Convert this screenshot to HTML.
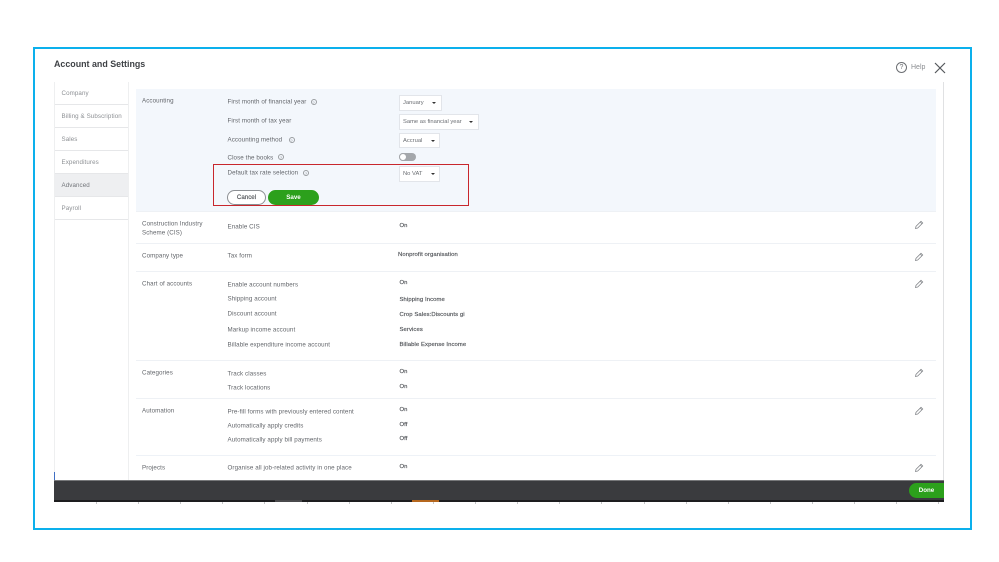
<!DOCTYPE html>
<html>
<head>
<meta charset="utf-8">
<style>
html,body{margin:0;padding:0;background:#fff}
body{width:999px;height:562px;position:relative;overflow:hidden;font-family:"Liberation Sans",sans-serif;color:#5c5f64;filter:blur(.3px)}
.a{position:absolute}
.t{position:absolute;font-size:6.2px;line-height:9px;white-space:nowrap;color:#63666b;letter-spacing:.1px;transform:translateY(.6px)}
.v{color:#4d5055;font-size:5.9px;-webkit-text-stroke:.15px #4d5055;transform:translateY(1.2px)}
.nav{position:absolute;left:55px;width:73px;height:22px;border-bottom:1px solid #e6e7e9;font-size:6.2px;line-height:23px;color:#8d9094;text-indent:6.5px;letter-spacing:.1px}
.sep{position:absolute;left:136px;width:800px;height:1px;background:#eef1f5}
.sel{position:absolute;background:#fff;border:1px solid #e2e5ea;box-sizing:border-box;font-size:5.8px;color:#6a6d72;line-height:15px;text-indent:3px;white-space:nowrap}
.ar{position:absolute;border-left:2.2px solid transparent;border-right:2.2px solid transparent;border-top:2.6px solid #333}
.i{position:absolute;width:6px;height:6px;box-sizing:border-box;border:.6px solid #9a9da1;border-radius:50%;font-size:4px;line-height:5px;text-align:center;color:#8a8d91}
svg.p{position:absolute;width:10px;height:10px}
.tick{position:absolute;top:502px;width:1px;height:1.5px;background:#c4c5c7}
</style>
</head>
<body>
<div class="a" style="left:33px;top:47px;width:939px;height:483px;box-sizing:border-box;border:2px solid #0cb0ec"></div>

<div class="a" style="left:54px;top:57.5px;font-size:8.9px;line-height:12px;font-weight:bold;color:#3f4246">Account and Settings</div>

<div class="a" style="left:896px;top:62px;width:11px;height:11px;box-sizing:border-box;border:1px solid #6d7074;border-radius:50%;font-size:7px;line-height:9px;text-align:center;color:#6d7074">?</div>
<div class="a" style="left:911px;top:63px;font-size:7px;line-height:10px;color:#8a8d91">Help</div>
<svg class="a" style="left:934px;top:62px" width="12" height="12" viewBox="0 0 12 12"><path d="M1 1L11 11M11 1L1 11" stroke="#55585c" stroke-width="1.2" fill="none"/></svg>

<!-- side nav -->
<div class="a" style="left:54px;top:82px;width:1px;height:398px;background:#eeeff0"></div>
<div class="a" style="left:128px;top:82px;width:1px;height:398px;background:#eeeff0"></div>
<div class="nav" style="top:82px">Company</div>
<div class="nav" style="top:105px">Billing &amp; Subscription</div>
<div class="nav" style="top:128px">Sales</div>
<div class="nav" style="top:151px">Expenditures</div>
<div class="nav" style="top:174px;background:#eeeff1;color:#72757a">Advanced</div>
<div class="nav" style="top:197px">Payroll</div>

<!-- accounting panel -->
<div class="a" style="left:136px;top:89px;width:800px;height:122px;background:#f3f7fc"></div>
<div class="a" style="left:943px;top:82px;width:1px;height:398px;background:#e0e1e3"></div>

<div class="t" style="left:142px;top:96px">Accounting</div>
<div class="t" style="left:227.5px;top:97px">First month of financial year</div>
<div class="i" style="left:310.5px;top:98.5px">?</div>
<div class="sel" style="left:399px;top:95px;width:43px;height:16px">January</div>
<div class="ar" style="left:432px;top:101.5px"></div>

<div class="t" style="left:227.5px;top:116px">First month of tax year</div>
<div class="sel" style="left:399px;top:114px;width:80px;height:16px">Same as financial year</div>
<div class="a" style="left:463px;top:115px;width:7px;height:14px;background:#fff"></div>
<div class="ar" style="left:469px;top:120.5px"></div>

<div class="t" style="left:227.5px;top:135px">Accounting method</div>
<div class="i" style="left:288.5px;top:136.5px">?</div>
<div class="sel" style="left:399px;top:133px;width:41px;height:15px">Accrual</div>
<div class="ar" style="left:431px;top:139.5px"></div>

<div class="t" style="left:227.5px;top:152.5px">Close the books</div>
<div class="i" style="left:278px;top:153.5px">?</div>
<div class="a" style="left:399px;top:153px;width:17px;height:8px;border-radius:4px;background:#a4a7ab"></div>
<div class="a" style="left:399px;top:153px;width:8px;height:8px;border-radius:50%;background:#fff;box-sizing:border-box;border:.7px solid #a4a7ab"></div>

<div class="a" style="left:213px;top:164px;width:256px;height:42px;box-sizing:border-box;border:1px solid #c8272d"></div>
<div class="t" style="left:227.5px;top:168px">Default tax rate selection</div>
<div class="i" style="left:303px;top:169.5px">?</div>
<div class="sel" style="left:399px;top:166px;width:41px;height:16px">No VAT</div>
<div class="ar" style="left:431px;top:172.5px"></div>

<div class="a" style="left:227px;top:190px;width:39px;height:15px;box-sizing:border-box;border:1px solid #8c8f93;border-radius:8px;background:#fff;font-size:6.2px;line-height:14px;text-align:center;color:#4e5155;-webkit-text-stroke:.15px #4e5155">Cancel</div>
<div class="a" style="left:268px;top:190px;width:51px;height:15px;border-radius:8px;background:#2ca01c;font-size:6.2px;line-height:16px;text-align:center;color:#fff;font-weight:bold">Save</div>

<!-- rows -->
<div class="sep" style="top:211px"></div>
<div class="t" style="left:142px;top:219px">Construction Industry</div>
<div class="t" style="left:142px;top:228px">Scheme (CIS)</div>
<div class="t" style="left:227.5px;top:222px">Enable CIS</div>
<div class="t v" style="left:399.5px;top:221px">On</div>

<div class="sep" style="top:243px"></div>
<div class="t" style="left:142px;top:251px">Company type</div>
<div class="t" style="left:227.5px;top:251px">Tax form</div>
<div class="t v" style="left:398px;top:250px">Nonprofit organisation</div>

<div class="sep" style="top:271px"></div>
<div class="t" style="left:142px;top:279px">Chart of accounts</div>
<div class="t" style="left:227.5px;top:280px">Enable account numbers</div>
<div class="t" style="left:227.5px;top:294px">Shipping account</div>
<div class="t" style="left:227.5px;top:309px">Discount account</div>
<div class="t" style="left:227.5px;top:325px">Markup income account</div>
<div class="t" style="left:227.5px;top:340px">Billable expenditure income account</div>
<div class="t v" style="left:399.5px;top:278px">On</div>
<div class="t v" style="left:399.5px;top:294.5px">Shipping Income</div>
<div class="t v" style="left:399.5px;top:309.5px">Crop Sales:Discounts gi</div>
<div class="t v" style="left:399.5px;top:325px">Services</div>
<div class="t v" style="left:399.5px;top:340px">Billable Expense Income</div>

<div class="sep" style="top:360px"></div>
<div class="t" style="left:142px;top:368px">Categories</div>
<div class="t" style="left:227.5px;top:369px">Track classes</div>
<div class="t" style="left:227.5px;top:383px">Track locations</div>
<div class="t v" style="left:399.5px;top:367px">On</div>
<div class="t v" style="left:399.5px;top:381.5px">On</div>

<div class="sep" style="top:398px"></div>
<div class="t" style="left:142px;top:406px">Automation</div>
<div class="t" style="left:227.5px;top:407px">Pre-fill forms with previously entered content</div>
<div class="t" style="left:227.5px;top:421px">Automatically apply credits</div>
<div class="t" style="left:227.5px;top:435px">Automatically apply bill payments</div>
<div class="t v" style="left:399.5px;top:405px">On</div>
<div class="t v" style="left:399.5px;top:419.5px">Off</div>
<div class="t v" style="left:399.5px;top:433.5px">Off</div>

<div class="a" style="left:136px;top:455px;width:800px;height:1px;background:#eef2f7"></div>
<div class="t" style="left:142px;top:462.5px">Projects</div>
<div class="t" style="left:227.5px;top:462.5px">Organise all job-related activity in one place</div>
<div class="t v" style="left:399.5px;top:461.5px">On</div>

<!-- pencils -->
<svg class="p" style="left:914px;top:220px" viewBox="0 0 10 10"><path d="M1.5 8.5L2 6.3L7 1.3L8.7 3L3.7 8Z" fill="#fff" stroke="#85888c" stroke-width=".8"/><path d="M6.2 2.1L7.9 3.8" stroke="#85888c" stroke-width=".7"/></svg>
<svg class="p" style="left:914px;top:252px" viewBox="0 0 10 10"><path d="M1.5 8.5L2 6.3L7 1.3L8.7 3L3.7 8Z" fill="#fff" stroke="#85888c" stroke-width=".8"/><path d="M6.2 2.1L7.9 3.8" stroke="#85888c" stroke-width=".7"/></svg>
<svg class="p" style="left:914px;top:279px" viewBox="0 0 10 10"><path d="M1.5 8.5L2 6.3L7 1.3L8.7 3L3.7 8Z" fill="#fff" stroke="#85888c" stroke-width=".8"/><path d="M6.2 2.1L7.9 3.8" stroke="#85888c" stroke-width=".7"/></svg>
<svg class="p" style="left:914px;top:368px" viewBox="0 0 10 10"><path d="M1.5 8.5L2 6.3L7 1.3L8.7 3L3.7 8Z" fill="#fff" stroke="#85888c" stroke-width=".8"/><path d="M6.2 2.1L7.9 3.8" stroke="#85888c" stroke-width=".7"/></svg>
<svg class="p" style="left:914px;top:406px" viewBox="0 0 10 10"><path d="M1.5 8.5L2 6.3L7 1.3L8.7 3L3.7 8Z" fill="#fff" stroke="#85888c" stroke-width=".8"/><path d="M6.2 2.1L7.9 3.8" stroke="#85888c" stroke-width=".7"/></svg>
<svg class="p" style="left:914px;top:463px" viewBox="0 0 10 10"><path d="M1.5 8.5L2 6.3L7 1.3L8.7 3L3.7 8Z" fill="#fff" stroke="#85888c" stroke-width=".8"/><path d="M6.2 2.1L7.9 3.8" stroke="#85888c" stroke-width=".7"/></svg>

<!-- footer -->
<div class="a" style="left:54px;top:472px;width:1px;height:8px;background:#3f6fc4"></div>
<div class="a" style="left:54px;top:480px;width:890px;height:20px;background:#3a3b3e;border-top:.5px solid #77787a;box-sizing:border-box"></div>
<div class="a" style="left:54px;top:500px;width:890px;height:2px;background:#1d1d1f"></div>
<div class="a" style="left:275px;top:499.5px;width:27px;height:2.5px;background:#4a4a4c"></div>
<div class="a" style="left:412px;top:499.5px;width:27px;height:2.5px;background:#b5671e"></div>
<div class="a" style="left:909px;top:483px;width:35px;height:15px;border-radius:8px 0 0 8px;background:#2ca01c;font-size:6.2px;line-height:16px;text-align:center;color:#fff;font-weight:bold">Done</div>

<div class="tick" style="left:96px"></div><div class="tick" style="left:138px"></div><div class="tick" style="left:180px"></div><div class="tick" style="left:222px"></div><div class="tick" style="left:264px"></div><div class="tick" style="left:307px"></div><div class="tick" style="left:349px"></div><div class="tick" style="left:391px"></div><div class="tick" style="left:433px"></div><div class="tick" style="left:475px"></div><div class="tick" style="left:517px"></div><div class="tick" style="left:559px"></div><div class="tick" style="left:601px"></div><div class="tick" style="left:644px"></div><div class="tick" style="left:686px"></div><div class="tick" style="left:728px"></div><div class="tick" style="left:770px"></div><div class="tick" style="left:812px"></div><div class="tick" style="left:854px"></div><div class="tick" style="left:896px"></div><div class="tick" style="left:938px"></div>
</body>
</html>
